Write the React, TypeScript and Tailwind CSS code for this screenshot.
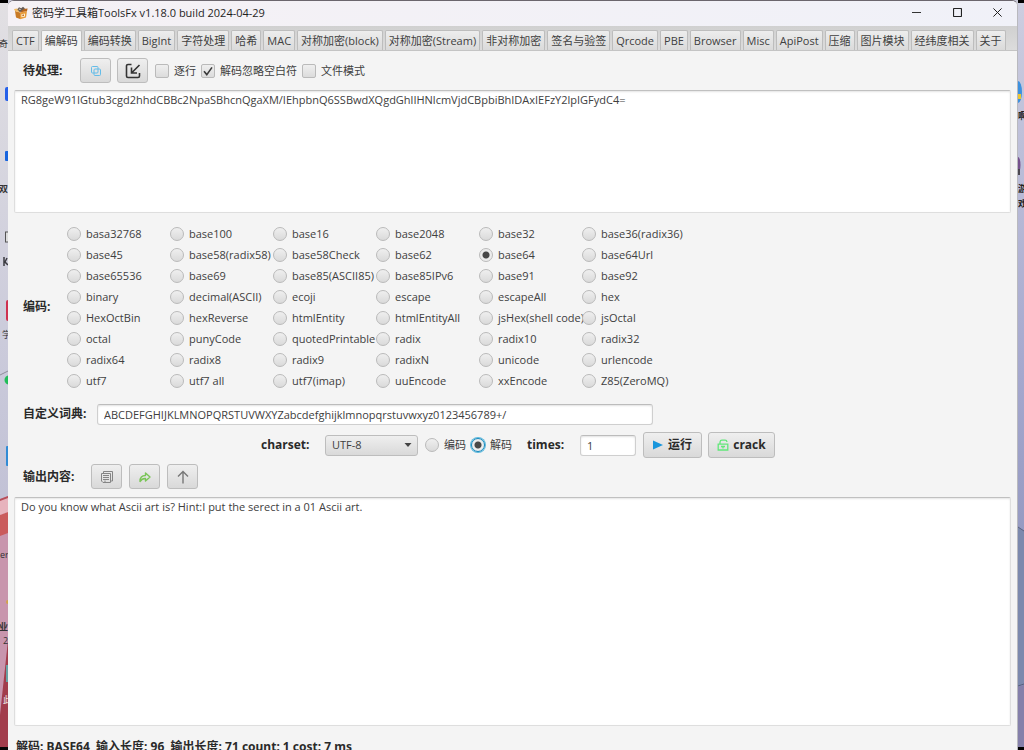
import React, { useState } from 'react';

const TABS = [
  'CTF', '编解码', '编码转换', 'BigInt', '字符处理', '哈希', 'MAC', '对称加密(block)',
  '对称加密(Stream)', '非对称加密', '签名与验签', 'Qrcode', 'PBE', 'Browser', 'Misc',
  'ApiPost', '压缩', '图片模块', '经纬度相关', '关于',
];

const CODECS = [
  'basa32768', 'base100', 'base16', 'base2048', 'base32', 'base36(radix36)',
  'base45', 'base58(radix58)', 'base58Check', 'base62', 'base64', 'base64Url',
  'base65536', 'base69', 'base85(ASCII85)', 'base85IPv6', 'base91', 'base92',
  'binary', 'decimal(ASCII)', 'ecoji', 'escape', 'escapeAll', 'hex',
  'HexOctBin', 'hexReverse', 'htmlEntity', 'htmlEntityAll', 'jsHex(shell code)', 'jsOctal',
  'octal', 'punyCode', 'quotedPrintable', 'radix', 'radix10', 'radix32',
  'radix64', 'radix8', 'radix9', 'radixN', 'unicode', 'urlencode',
  'utf7', 'utf7 all', 'utf7(imap)', 'uuEncode', 'xxEncode', 'Z85(ZeroMQ)',
];

const RADIO =
  'size-[14px] shrink-0 appearance-none rounded-full border border-[#bababa] bg-linear-to-b from-[#efefef] to-[#dadada] checked:bg-[radial-gradient(circle,#484848_3px,#ececec_4px)]';
const RADIO_FOCUS = 'checked:border-[#0f86bd] checked:ring-1 checked:ring-[#5db8dc]';
const CHECK =
  'col-start-1 row-start-1 size-[14px] appearance-none rounded-xs border border-[#bababa] bg-linear-to-b from-[#efefef] to-[#dcdcdc]';
const BUTTON =
  'flex items-center justify-center rounded-[3px] border border-[#bdbdbd] bg-linear-to-b from-[#efefef] to-[#d9d9d9]';
const TOOL = `${BUTTON} h-[25px] w-[31px] shrink-0`;
const FIELD =
  'rounded-[3px] border border-[#cfcfcf] border-t-[#bcbcbc] bg-white shadow-[inset_0_1px_2px_#e2e2e2] outline-none';
const AREA =
  'block w-full resize-none rounded-xs border border-[#dedede] border-t-[#c0c0c0] bg-white px-[6px] py-[1px] leading-[16px] shadow-[inset_0_1px_2px_#e4e4e4] outline-none';
const HEADING = 'text-[12px] font-bold text-[#2a2a2a]';

function Check({ label, initial = false }: { label: string; initial?: boolean }) {
  const [on, setOn] = useState(initial);
  return (
    <label className="flex items-center gap-[5px]">
      <span className="grid">
        <input type="checkbox" checked={on} onChange={() => setOn(!on)} className={CHECK} />
        {on && (
          <svg viewBox="0 0 14 14" className="pointer-events-none col-start-1 row-start-1 size-[14px]">
            <path d="M3 7.2 5.8 10.6 11 3.4" fill="none" stroke="#3c3c3c" strokeWidth="1.6" />
          </svg>
        )}
      </span>
      {label}
    </label>
  );
}

function BoxIcon() {
  return (
    <svg viewBox="0 0 14 14" className="size-[14px]">
      <path d="M1 5 6 6.6V13L2 11.5Z" fill="#c87a25" />
      <path d="M6 6.6 13 5 12 11.6 6 13.2Z" fill="#e89a38" />
      <path d="M1 5 0 3 3.4 2.6 6 6.6Z" fill="#f3bb62" />
      <path d="M6 6.6 8 3 13.6 2.4 13 5Z" fill="#b7651d" />
      <path d="M3.4 3.5 5 1.2 7.2 2.2 9 .8 11 2.6 8.5 4 6 6.2Z" fill="#665b55" />
      <path d="M4.6 3.4 6 2.6 7 4Z" fill="#e5e0d5" />
      <path d="M7.4 8.2 11 7.4V10.4L7.4 11.2Z" fill="#fff1d2" />
      <path d="M8.4 8.8 10 8.4V9.8L8.4 10.2Z" fill="#b46021" />
    </svg>
  );
}

function LeftDesktop() {
  return (
    <div aria-hidden="true" className="relative w-2 shrink-0 overflow-hidden bg-linear-to-b from-[#e2e0e3] via-[#c9c9da] to-[#b4b3cd] text-[9px] text-[#333]">
      <svg viewBox="0 0 8 750" preserveAspectRatio="none" className="absolute inset-0 h-full w-full">
        <rect width="8" height="3" fill="#000" />
        <path d="M0 499 8 496V750H0Z" fill="#c895ad" />
        <path d="M0 499 8 496V512L0 515Z" fill="#b74f5a" />
        <path d="M0 515 8 512V533L0 536Z" fill="#ca5b5c" />
        <path d="M0 501 8 498V512L0 515Z" fill="#e7b3bd" />
        <path d="M8 640V750H0V715Z" fill="#a23d4c" />
        <rect y="747" width="8" height="3" fill="#050505" />
        <path d="M0 375 8 371" stroke="#77747e" strokeWidth=".7" />
        <rect x="5" y="87" width="5" height="14" rx="2" fill="#2560e9" />
        <rect x="5" y="151" width="5" height="10" rx="1" fill="#1764de" />
        <rect x="5.500" y="232" width="5" height="10" fill="#ddd" stroke="#555" />
        <path d="M4 257V266M7 258 5 262 8 265" stroke="#3b3b40" strokeWidth="1.500" fill="none" />
        <rect x="6" y="300" width="5" height="21" rx="2" fill="#cf3150" />
        <circle cx="9" cy="380" r="4.500" fill="#20bd59" />
        <rect x="6" y="446" width="4" height="20" rx="1" fill="#318bd5" />
        <circle cx="8" cy="602" r="2" fill="#d3a348" />
        <rect x="6" y="665" width="4" height="17" fill="#69a1a4" />
      </svg>
      <span className="absolute top-[36px] right-0">奇</span>
      <span className="absolute top-[181px] right-0 font-bold">双</span>
      <span className="absolute top-[327px] left-[2px]">学</span>
      <span className="absolute top-[547px] left-0">er</span>
      <span className="absolute top-[619px] right-0 font-bold">业</span>
      <span className="absolute top-[633px] left-[3px]">2</span>
      <span className="absolute top-[692px] left-[3px] text-[#eee]">此</span>
    </div>
  );
}

function RightDesktop() {
  return (
    <div aria-hidden="true" className="relative w-[6px] shrink-0 overflow-hidden bg-linear-to-b from-[#cdcee0] via-[#a5a8ce] to-[#8087b1] text-[9px] text-[#222]">
      <svg viewBox="0 0 6 750" preserveAspectRatio="none" className="absolute inset-0 h-full w-full">
        <rect width="6" height="3" fill="#000" />
        <ellipse cx="0" cy="92" rx="4" ry="11" fill="#3d91df" />
        <rect y="94" width="3" height="5" fill="#eac531" />
        <ellipse cx="0" cy="165" rx="2.500" ry="8" fill="#76528e" />
        <rect y="169" width="2" height="6" fill="#4a4750" />
        <path d="M0 527 6 531V684L0 686Z" fill="#7c89ad" />
        <path d="M0 527 6 531M0 686 6 684" stroke="#59617e" />
        <path d="M0 687 6 685V747H0Z" fill="#8580aa" />
        <rect y="747" width="6" height="3" fill="#000" />
      </svg>
      <span className="absolute top-[108px] left-0 font-bold">啊</span>
      <span className="absolute top-[181px] left-0 font-bold">游</span>
      <span className="absolute top-[196px] left-0 font-bold">戏</span>
    </div>
  );
}

export default function App() {
  const [tab, setTab] = useState('编解码');
  const [codec, setCodec] = useState('base64');
  const [mode, setMode] = useState('解码');

  return (
    <div className="flex h-screen overflow-hidden bg-[#c9c9d8] font-['Open_Sans','Noto_Sans_CJK_SC',sans-serif] text-[11px] leading-[16px] text-[#404040]">
      <LeftDesktop />
      <div className="flex min-w-0 flex-1 flex-col overflow-hidden rounded-t-md border-t border-r border-t-[#6b666d] border-r-[#b9b9be] bg-[#f4f4f4]">
        <header className="flex h-[25px] shrink-0 items-center justify-between bg-linear-to-r from-[#f5f1f5] to-[#f0f1f8] pb-[2px] pl-[6px] text-[#1f1f1f]">
          <div className="flex items-center gap-[4px]">
            <BoxIcon />
            <h1>密码学工具箱ToolsFx v1.18.0 build 2024-04-29</h1>
          </div>
          <div className="flex">
            <button aria-label="Minimize" className="flex h-6 w-[41px] items-center justify-center">
              <svg viewBox="0 0 9 9" className="size-[9px]"><path d="M0 4.500H9" stroke="#333" /></svg>
            </button>
            <button aria-label="Maximize" className="flex h-6 w-[40px] items-center justify-center">
              <svg viewBox="0 0 9 9" className="size-[9px]"><rect x=".5" y=".5" width="8" height="8" rx=".8" fill="none" stroke="#222" strokeWidth="1.200" /></svg>
            </button>
            <button aria-label="Close" className="flex h-6 w-[40px] items-center justify-center">
              <svg viewBox="0 0 9 9" className="size-[9px]"><path d="M.4.4 8.600 8.600M8.600.4.4 8.600" stroke="#222" /></svg>
            </button>
          </div>
        </header>

        <nav role="tablist" className="flex h-[25px] shrink-0 items-end gap-[2px] border-b border-[#c4c4c4] bg-linear-to-b from-[#d0d0d0] to-[#dcdcdc] pl-[4px]">
          {TABS.map((name) => (
            <button
              key={name}
              role="tab"
              aria-selected={tab === name}
              onClick={() => setTab(name)}
              className={`shrink-0 rounded-t-xs border border-b-0 border-[#bdbdbd] px-[3px] whitespace-nowrap ${
                tab === name ? '-mb-px h-[21px] bg-[#f4f4f4]' : 'h-[20px] bg-linear-to-b from-[#ededed] to-[#dadada]'
              }`}
            >
              {name}
            </button>
          ))}
        </nav>

        <main className="flex min-h-0 flex-1 flex-col pr-[6px] pl-[6px]">
          <div className="flex h-[39px] shrink-0 items-center pl-[9px]">
            <label htmlFor="source" className={`${HEADING} w-[57px]`}>待处理:</label>
            <div className="flex gap-[6px]">
              <button aria-label="Copy" className={TOOL}>
                <svg viewBox="0 0 12 12" className="size-3">
                  <g fill="none" stroke="#64bce8"><rect x="1.500" y="1.500" width="6.500" height="6.500" rx="1" /><rect x="4" y="4" width="6.500" height="6.500" rx="1" /></g>
                </svg>
              </button>
              <button aria-label="Import" className={TOOL}>
                <svg viewBox="0 0 16 16" className="size-4">
                  <path d="M6.500 1.500H3A1.500 1.500 0 0 0 1.500 3V13A1.500 1.500 0 0 0 3 14.500H13A1.500 1.500 0 0 0 14.500 13V10M14.500 2 7 9.500M6.500 4.500V10H12" fill="none" stroke="#333" strokeWidth="1.600" />
                </svg>
              </button>
            </div>
            <div className="ml-[7px] flex gap-[5px]">
              <Check label="逐行" />
              <Check label="解码忽略空白符" initial />
              <Check label="文件模式" />
            </div>
          </div>

          <textarea
            id="source"
            spellCheck={false}
            className={`${AREA} h-[123px] shrink-0`}
            defaultValue="RG8geW91IGtub3cgd2hhdCBBc2NpaSBhcnQgaXM/IEhpbnQ6SSBwdXQgdGhlIHNlcmVjdCBpbiBhIDAxIEFzY2lpIGFydC4="
          />

          <div className="flex shrink-0 items-center pt-[10px] pb-[11px] pl-[9px]">
            <span id="codec-title" className={`${HEADING} w-[44px]`}>编码:</span>
            <div role="radiogroup" aria-labelledby="codec-title" className="grid grid-cols-[repeat(6,103px)]">
              {CODECS.map((name) => (
                <label key={name} className="flex h-[21px] items-center gap-[5px] whitespace-nowrap">
                  <input type="radio" name="codec" checked={codec === name} onChange={() => setCodec(name)} className={RADIO} />
                  {name}
                </label>
              ))}
            </div>
          </div>

          <div className="flex h-[24px] shrink-0 items-center pl-[9px]">
            <label htmlFor="dictionary" className={`${HEADING} w-[74px]`}>自定义词典:</label>
            <input
              id="dictionary"
              spellCheck={false}
              className={`${FIELD} h-[21px] w-[556px] px-[6px]`}
              defaultValue="ABCDEFGHIJKLMNOPQRSTUVWXYZabcdefghijklmnopqrstuvwxyz0123456789+/"
            />
          </div>

          <div className="flex h-[38px] shrink-0 items-center pl-[247px]">
            <label htmlFor="charset" className={`${HEADING} w-[64px]`}>charset:</label>
            <div className="grid items-center">
              <select
                id="charset"
                defaultValue="UTF-8"
                className="col-start-1 row-start-1 h-[21px] w-[93px] appearance-none rounded-[3px] border border-[#bdbdbd] bg-linear-to-b from-[#efefef] to-[#d9d9d9] px-[6px]"
              >
                <option>UTF-8</option>
                <option>GBK</option>
              </select>
              <svg viewBox="0 0 8 4" className="pointer-events-none col-start-1 row-start-1 mr-[6px] h-1 w-2 justify-self-end"><path d="M.5 0H7.500L4 4Z" fill="#444" /></svg>
            </div>
            <div className="ml-[7px] flex gap-[5px]">
              {['编码', '解码'].map((name) => (
                <label key={name} className="flex items-center gap-[5px]">
                  <input type="radio" name="mode" checked={mode === name} onChange={() => setMode(name)} className={`${RADIO} ${RADIO_FOCUS}`} />
                  {name}
                </label>
              ))}
            </div>
            <label htmlFor="times" className={`${HEADING} ml-[15px] w-[53px]`}>times:</label>
            <input id="times" defaultValue="1" className={`${FIELD} h-[21px] w-[56px] px-[6px]`} />
            <button className={`${BUTTON} ${HEADING} ml-[7px] h-[26px] w-[59px] gap-[5px]`}>
              <svg viewBox="0 0 10 10" className="size-[10px]"><path d="M0 .5 10 5 0 9.500Z" fill="#1996dc" /></svg>
              运行
            </button>
            <button className={`${BUTTON} ${HEADING} ml-[6px] h-[26px] w-[67px] gap-[4px]`}>
              <svg viewBox="0 0 12 12" className="size-3">
                <path d="M3 5V3A2 2 0 0 1 5 1.200H8A2 2 0 0 1 10 3M1.200 5.200H10.800V11H1.200ZM6 8V9.500M4 7.500H8" fill="none" stroke="#62e77a" strokeWidth="1.300" />
              </svg>
              crack
            </button>
          </div>

          <div className="flex h-[33px] shrink-0 items-center pb-[8px] pl-[9px]">
            <label htmlFor="result" className={`${HEADING} w-[68px]`}>输出内容:</label>
            <div className="flex gap-[7px]">
              <button aria-label="Copy result" className={TOOL}>
                <svg viewBox="0 0 14 14" className="size-[14px]">
                  <path d="M3.500 3V1.500H12.500V11H11M1.500 3.500H10.500V12.500H3L1.500 11ZM3 5.500H9M3 7.500H9M3 9.500H9M5 12V10.500" fill="none" stroke="#858585" />
                </svg>
              </button>
              <button aria-label="Send result to input" className={TOOL}>
                <svg viewBox="0 0 12 12" className="size-3">
                  <path d="M1 10.500C1 6.500 3 4.500 6.500 4.500V2L11 6 6.500 10V7.500C4 7.300 2.500 8.200 1 10.500Z" fill="none" stroke="#7ac557" strokeWidth="1.400" strokeLinejoin="round" />
                </svg>
              </button>
              <button aria-label="Move up" className={TOOL}>
                <svg viewBox="0 0 14 14" className="size-[14px]"><path d="M7 13.500V1.500M2 6.500 7 1.500 12 6.500" fill="none" stroke="#777" strokeWidth="1.400" /></svg>
              </button>
            </div>
          </div>

          <textarea
            id="result"
            spellCheck={false}
            className={`${AREA} min-h-0 flex-1`}
            defaultValue="Do you know what Ascii art is? Hint:I put the serect in a 01 Ascii art."
          />
        </main>

        <footer className={`${HEADING} h-[24px] shrink-0 overflow-hidden pt-[13px] pl-[8px] font-['Noto_Sans','Noto_Sans_CJK_SC',sans-serif] whitespace-pre`}>
          解码: BASE64  输入长度: 96  输出长度: 71 count: 1 cost: 7 ms
        </footer>
      </div>
      <RightDesktop />
    </div>
  );
}
